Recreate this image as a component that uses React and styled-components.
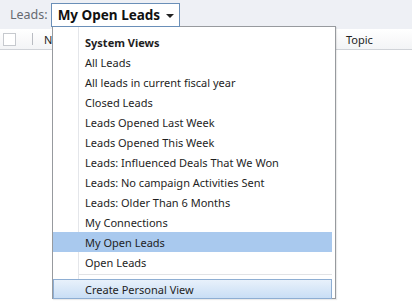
import React from "react";
import styled, { createGlobalStyle } from "styled-components";

const Global = createGlobalStyle`
  html, body { margin: 0; padding: 0; background: #ffffff; overflow: hidden; }
  * { box-sizing: border-box; }
`;

const Page = styled.div`
  position: relative;
  width: 412px;
  height: 308px;
  font-family: "Segoe UI", "Noto Sans", sans-serif;
  background: #ffffff;
`;

const TopBar = styled.div`
  height: 29px;
  background: #eef0f5;
  display: flex;
  align-items: flex-start;
  padding: 3px 0 0 10px;
  gap: 3px;
`;

const Label = styled.span`
  font-size: 12.5px;
  color: #666a70;
  line-height: 23px;
`;

const ViewSelector = styled.div`
  height: 24px;
  width: 129px;
  border: 1px solid #6a8fb8;
  background: #ffffff;
  display: flex;
  align-items: center;
  padding-left: 6px;
  gap: 6px;
  font-size: 13.5px;
  font-weight: 700;
  color: #111;
  white-space: nowrap;
  position: relative;
  z-index: 2;
`;

const Caret = styled.span`
  width: 0;
  height: 0;
  border-left: 4px solid transparent;
  border-right: 4px solid transparent;
  border-top: 4px solid #222;
  margin-top: 2px;
`;

const HeaderRow = styled.div`
  height: 21px;
  display: flex;
  align-items: center;
  border-bottom: 1px solid #d0d3d8;
  background: linear-gradient(#ffffff, #f3f4f6);
  font-size: 11px;
  color: #222;
`;

const CheckCell = styled.div`
  width: 33px;
  display: flex;
  align-items: center;
  padding-left: 3px;
  border-right: 1px solid #b9bcc2;
  height: 12px;
`;

const Check = styled.span`
  width: 13px;
  height: 13px;
  border: 1px solid #c6c9ce;
  background: #fff;
`;

const HeaderCell = styled.div`
  padding-left: ${p => p.$pad}px;
  width: ${p => p.$w}px;
`;

const Menu = styled.div`
  position: absolute;
  left: 52px;
  top: 26px;
  width: 284px;
  height: 273px;
  border: 1px solid #979a9e;
  background: linear-gradient(to right, transparent 25px, #e4e6ea 25px, #e4e6ea 26px, #fff 26px, #fff 27px, transparent 27px), #ffffff;
  box-shadow: 1px 1px 1px rgba(0,0,0,0.08);
  padding: 5px 3px 0 0;
  display: flex;
  flex-direction: column;
  font-size: 11px;
  color: #1e1e1e;
  z-index: 1;
`;

const Item = styled.div`
  height: 20px;
  line-height: 21px;
  padding-left: 32px;
  white-space: nowrap;
  font-weight: ${p => (p.$heading ? 700 : 400)};
  background: ${p => (p.$selected ? "#a9c9ee" : "transparent")};
`;

const Separator = styled.div`
  height: 2px;
  margin: 2px 0 3px 26px;
  border-top: 1px solid #e2e3e6;
  border-bottom: 1px solid #ffffff;
`;

const ActionItem = styled.div`
  height: 20px;
  line-height: 19px;
  padding-left: 31px;
  border: 1px solid #8eaed3;
  background: linear-gradient(#e8f1fb, #c9def5);
`;

const items = [
  "All Leads",
  "All leads in current fiscal year",
  "Closed Leads",
  "Leads Opened Last Week",
  "Leads Opened This Week",
  "Leads: Influenced Deals That We Won",
  "Leads: No campaign Activities Sent",
  "Leads: Older Than 6 Months",
  "My Connections",
  "My Open Leads",
  "Open Leads",
];

export default function App() {
  return (
    <Page>
      <Global />
      <TopBar>
        <Label>Leads:</Label>
        <ViewSelector>
          My Open Leads <Caret />
        </ViewSelector>
      </TopBar>
      <HeaderRow>
        <CheckCell>
          <Check />
        </CheckCell>
        <HeaderCell $pad={11} $w={302}>N</HeaderCell>
        <HeaderCell $pad={11}>Topic</HeaderCell>
      </HeaderRow>
      <Menu>
        <Item $heading>System Views</Item>
        {items.map(t => (
          <Item key={t} $selected={t === "My Open Leads"}>{t}</Item>
        ))}
        <Separator />
        <ActionItem>Create Personal View</ActionItem>
      </Menu>
    </Page>
  );
}
